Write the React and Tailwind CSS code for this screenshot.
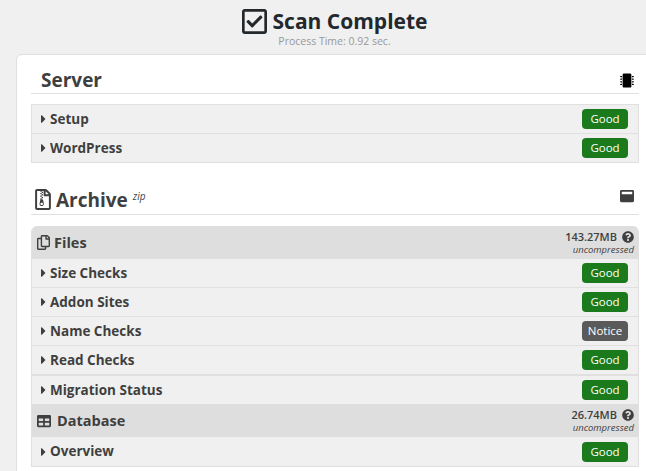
import React from 'react';
import {
  FaRegCheckSquare,
  FaCaretRight,
  FaMicrochip,
  FaRegFileArchive,
  FaWindowMaximize,
  FaRegCopy,
  FaTable,
  FaQuestionCircle,
} from 'react-icons/fa';

function Badge({ label = 'Good' }) {
  const color = label === 'Good' ? 'bg-[#1b7a1b]' : 'bg-[#5a5a5a]';
  return (
    <span className={`flex h-[20px] w-[46px] items-center justify-center rounded-[4px] text-[11.5px] leading-none text-white ${color}`}>
      {label}
    </span>
  );
}

// normal rows have a 1px divider, Read Checks has a 2px one, the rest sit flush against what follows
function Row({ title, status, kind = 'normal' }) {
  const rowClass = {
    normal: 'h-[29px] border-b',
    thick: 'h-[30px] border-b-2',
    flush: 'h-[28px]',
    last: 'h-[29px]',
  }[kind];
  return (
    <div className={`flex items-center justify-between border-[#e0e0e0] bg-[#f0f0f0] pl-[9px] pr-[10px] ${rowClass}`}>
      <div className="flex items-center text-[13.5px] font-bold text-[#3f3f3f]">
        <FaCaretRight className="mr-[4px] h-[14px] w-[5px] text-[#3f3f3f]" />
        {title}
      </div>
      <Badge label={status} />
    </div>
  );
}

function GroupHead({ icon, title, size }) {
  return (
    <div className="flex h-[33px] items-center justify-between bg-[#dedede] pl-[5px] pr-[4px]">
      <div className="flex items-center text-[14.5px] font-bold text-[#3f3f3f]">
        {icon}
        {title}
      </div>
      <div className="flex flex-col items-end text-[#3f3f3f]">
        <div className="flex items-center gap-[5px] text-[11px] font-semibold leading-[14px]">
          {size}
          <FaQuestionCircle className="h-[12px] w-[12px]" />
        </div>
        <i className="text-[9.5px] leading-[11px]">uncompressed</i>
      </div>
    </div>
  );
}

export default function App() {
  return (
    <div className="h-[471px] w-[646px] overflow-hidden bg-[#f0f0f0] font-['Open_Sans',sans-serif]">
      <div className="w-[669px]">
        <div className="flex h-[54px] flex-col items-center pt-[6px]">
          <div className="flex items-center gap-[6px] text-[21px] font-bold leading-[30px] text-[#23282d]">
            <FaRegCheckSquare className="h-[29px] w-[25px]" />
            Scan Complete
          </div>
          <div className="-mt-[1px] text-[10.5px] leading-[13px] text-[#999999]">Process Time: 0.92 sec.</div>
        </div>

        <div className="ml-[16px] h-[420px] rounded-tl-[6px] border border-[#e0e0e0] bg-white pl-[14px] pr-[29px]">
          <div className="flex h-[39px] items-end justify-between border-b border-[#e0e0e0] pl-[10px] pr-[5px]">
            <span className="text-[19px] font-bold leading-[26px] text-[#3f3f3f]">Server</span>
            <FaMicrochip className="mb-[5px] h-[15px] w-[14px] text-black" />
          </div>
          <div className="mt-[10px] border border-[#e0e0e0]">
            <Row title="Setup" status="Good" />
            <Row title="WordPress" status="Good" kind="flush" />
          </div>

          <div className="mt-[22px] flex h-[30px] items-center justify-between border-b border-[#e0e0e0] pl-[4px] pr-[5px]">
            <div className="flex items-center gap-[5px] text-[19px] font-bold leading-[28px] text-[#3f3f3f]">
              <FaRegFileArchive className="h-[21px] w-[16px]" />
              Archive
              <i className="mb-[8px] text-[10px] font-normal leading-none">zip</i>
            </div>
            <FaWindowMaximize className="mb-[7px] h-[14px] w-[14px] text-[#3f3f3f]" />
          </div>
          <div className="mt-[11px] overflow-hidden rounded-t-[6px] border border-t-0 border-[#e0e0e0]">
            <GroupHead icon={<FaRegCopy className="mr-[4px] h-[15px] w-[13px]" />} title="Files" size="143.27MB" />
            <Row title="Size Checks" status="Good" />
            <Row title="Addon Sites" status="Good" />
            <Row title="Name Checks" status="Notice" />
            <Row title="Read Checks" status="Good" kind="thick" />
            <Row title="Migration Status" status="Good" kind="flush" />
            <GroupHead icon={<FaTable className="mr-[6px] h-[14px] w-[14px]" />} title="Database" size="26.74MB" />
            <Row title="Overview" status="Good" kind="last" />
          </div>
        </div>
      </div>
    </div>
  );
}
